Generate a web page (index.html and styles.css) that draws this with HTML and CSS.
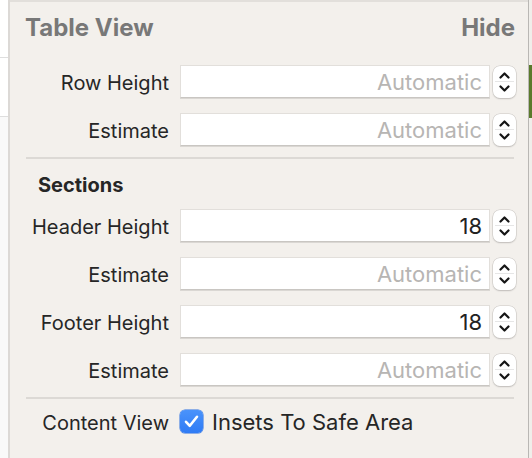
FILE: index.html
```html
<!DOCTYPE html>
<html>
<head>
<meta charset="utf-8">
<link rel="stylesheet" href="styles.css">
</head>
<body>
<div class="page">
  <div class="left-strip">
    <div class="ls-a"></div>
    <div class="ls-b"></div>
    <div class="ls-c"></div>
  </div>
  <div class="panel">
    <div class="head">
      <span class="title">Table View</span>
      <span class="title">Hide</span>
    </div>
    <div class="group first">
      <div class="row">
        <label class="lbl">Row Height</label>
        <div class="field placeholder">Automatic</div>
        <div class="stepper"><svg viewBox="0 0 23 32" width="23" height="32"><path d="M7.5 11.5 L11.5 7.5 L15.5 11.5" /><path d="M7.5 20.5 L11.5 24.5 L15.5 20.5" /></svg></div>
      </div>
      <div class="row">
        <label class="lbl">Estimate</label>
        <div class="field placeholder">Automatic</div>
        <div class="stepper"><svg viewBox="0 0 23 32" width="23" height="32"><path d="M7.5 11.5 L11.5 7.5 L15.5 11.5" /><path d="M7.5 20.5 L11.5 24.5 L15.5 20.5" /></svg></div>
      </div>
    </div>
    <div class="sep"></div>
    <div class="section-title">Sections</div>
    <div class="group">
      <div class="row">
        <label class="lbl">Header Height</label>
        <div class="field">18</div>
        <div class="stepper"><svg viewBox="0 0 23 32" width="23" height="32"><path d="M7.5 11.5 L11.5 7.5 L15.5 11.5" /><path d="M7.5 20.5 L11.5 24.5 L15.5 20.5" /></svg></div>
      </div>
      <div class="row">
        <label class="lbl">Estimate</label>
        <div class="field placeholder">Automatic</div>
        <div class="stepper"><svg viewBox="0 0 23 32" width="23" height="32"><path d="M7.5 11.5 L11.5 7.5 L15.5 11.5" /><path d="M7.5 20.5 L11.5 24.5 L15.5 20.5" /></svg></div>
      </div>
      <div class="row">
        <label class="lbl">Footer Height</label>
        <div class="field">18</div>
        <div class="stepper"><svg viewBox="0 0 23 32" width="23" height="32"><path d="M7.5 11.5 L11.5 7.5 L15.5 11.5" /><path d="M7.5 20.5 L11.5 24.5 L15.5 20.5" /></svg></div>
      </div>
      <div class="row">
        <label class="lbl">Estimate</label>
        <div class="field placeholder">Automatic</div>
        <div class="stepper"><svg viewBox="0 0 23 32" width="23" height="32"><path d="M7.5 11.5 L11.5 7.5 L15.5 11.5" /><path d="M7.5 20.5 L11.5 24.5 L15.5 20.5" /></svg></div>
      </div>
    </div>
    <div class="sep"></div>
    <div class="row check-row">
      <label class="lbl">Content View</label>
      <div class="check-wrap">
        <span class="checkbox"><svg viewBox="0 0 23 23" width="23" height="23"><path d="M6 11.8 L9.8 15.8 L17 6.8" /></svg></span>
        <span class="check-text">Insets To Safe Area</span>
      </div>
    </div>
  </div>
  <div class="right-strip">
    <div class="rs-a"></div>
    <div class="rs-green"></div>
    <div class="rs-b"></div>
  </div>
</div>
</body>
</html>
```

FILE: styles.css
```css
* { box-sizing: border-box; }
html, body {
  margin: 0;
  padding: 0;
  background: #f3f0ec;
}
body {
  font-family: Inter, "Noto Sans", "Liberation Sans", sans-serif;
  color: #262626;
}
.page {
  display: flex;
  width: 532px;
  height: 458px;
  overflow: hidden;
}
.left-strip {
  width: 10px;
  flex: none;
  display: flex;
  flex-direction: column;
  border-right: 2px solid #dcd9d6;
}
.ls-a {
  height: 58px;
  background: #ffffff;
  border-bottom: 1px solid #dedede;
}
.ls-b {
  height: 59px;
  background: #ffffff;
  border-bottom: 1px solid #dedede;
}
.ls-c {
  flex: 1;
  background: #f9f9f9;
}
.panel {
  width: 518px;
  flex: none;
  min-width: 0;
  border-top: 2px solid #e2dfdb;
  padding: 0 12px 0 15px;
  display: flex;
  flex-direction: column;
}
.head {
  height: 51px;
  display: flex;
  justify-content: space-between;
  align-items: center;
  padding-right: 1px;
}
.title {
  font-size: 24px;
  font-weight: 700;
  color: #787878;
}
.group {
  display: flex;
  flex-direction: column;
  gap: 15px;
}
.group.first {
  margin-top: 12px;
}
.row {
  display: grid;
  grid-template-columns: 144px 310px 23px;
  column-gap: 11px;
  align-items: center;
  height: 33px;
}
.row .stepper { margin-left: -8px; }
.lbl {
  font-size: 20px;
  text-align: right;
  color: #262626;
  white-space: nowrap;
  padding-top: 3px;
}
.field {
  height: 33px;
  background: #ffffff;
  border: 1px solid #e2dfdb;
  border-bottom: 1px solid #c9c6c2;
  box-shadow: 0 1px 0 #dad7d3;
  font-size: 22px;
  text-align: right;
  padding: 0 7px 0 0;
  line-height: 32px;
  color: #222222;
}
.field.placeholder {
  color: #b7b5b3;
}
.stepper {
  width: 23px;
  height: 32px;
  background: #ffffff;
  border-radius: 7px;
  box-shadow: 0 0 0 0.5px #c9c6c2, 0 1px 1.5px rgba(0,0,0,0.22);
  position: relative;
}
.stepper::after {
  content: "";
  position: absolute;
  left: 2px;
  right: 2px;
  top: 15.5px;
  height: 1px;
  background: #e6e6e6;
}
.stepper svg {
  display: block;
}
.stepper path {
  fill: none;
  stroke: #151515;
  stroke-width: 2.2;
  stroke-linecap: round;
  stroke-linejoin: round;
}
.sep {
  height: 2px;
  background: #dcd9d5;
  margin: 11px 0 0 1px;
  width: 488px;
}
.section-title {
  height: 50px;
  display: flex;
  align-items: center;
  padding-left: 13px;
  padding-top: 2px;
  font-size: 20px;
  font-weight: 700;
  color: #262626;
}
.check-row {
  margin-top: 6px;
}
.check-wrap {
  display: flex;
  align-items: center;
  gap: 9px;
  grid-column: 2 / span 2;
}
.checkbox {
  width: 23px;
  height: 23px;
  flex: none;
  border-radius: 5px;
  background: linear-gradient(#4a93fb, #2f7bf5);
  box-shadow: 0 0 0 0.5px #2a6fe0;
  display: block;
}
.checkbox svg { display: block; }
.checkbox path {
  fill: none;
  stroke: #ffffff;
  stroke-width: 2.6;
  stroke-linecap: round;
  stroke-linejoin: round;
}
.check-text {
  font-size: 22px;
  color: #262626;
  padding-top: 1px;
}
.right-strip {
  width: 4px;
  flex: none;
  border-left: 1px solid #b9b7b4;
  display: flex;
  flex-direction: column;
}
.rs-a { height: 65px; background: #f0eeea; }
.rs-green { height: 53px; background: #5a7a2c; }
.rs-b { flex: 1; background: #f0eeea; }
```
